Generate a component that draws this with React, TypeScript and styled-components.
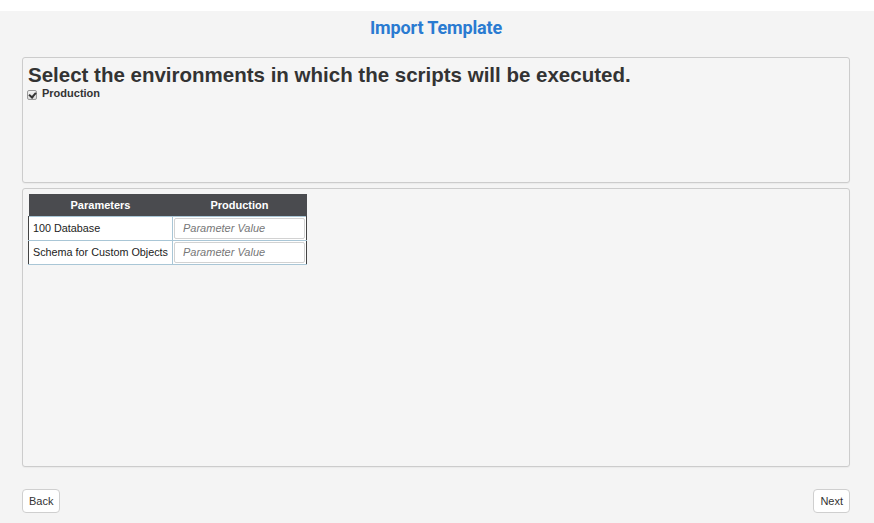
import React from "react";
import styled, { createGlobalStyle } from "styled-components";

const Global = createGlobalStyle`
  html, body { margin: 0; padding: 0; background: #ffffff; }
  body { font-family: "Liberation Sans", Arial, sans-serif; }
  * { box-sizing: border-box; }
`;

const Page = styled.div`
  margin-top: 11px;
  height: 512px;
  background: #f4f4f4;
  padding: 0 24px 0 22px;
  display: flex;
  flex-direction: column;
`;

const Title = styled.h1`
  margin: 0;
  height: 46px;
  padding-top: 6px;
  text-align: center;
  line-height: 22px;
  font-family: Roboto, "Liberation Sans", sans-serif;
  font-weight: 700;
  font-size: 18px;
  letter-spacing: -0.15px;
  color: #2a7bd1;
`;

const Panel = styled.div<{ $h: number }>`
  height: ${(p) => p.$h}px;
  border: 1px solid #cccccc;
  border-radius: 3px;
  background: #f5f5f5;
  padding: 5px;
  box-shadow: 0 1px 1px rgba(0,0,0,0.04);
`;

const Heading = styled.h2`
  margin: 0;
  font-size: 20.5px;
  line-height: 24px;
  font-weight: 700;
  color: #333333;
`;

const CheckRow = styled.label`
  display: flex;
  align-items: center;
  gap: 5px;
  font-size: 11px;
  font-weight: 700;
  color: #333333;
  margin-top: -2px;
`;

const Check = styled.input`
  appearance: none;
  margin: 5px 0 0 -1px;
  width: 10px;
  height: 10px;
  border: 1px solid #9a9a9a;
  border-radius: 2px;
  background: linear-gradient(#f2f2f2, #dcdcdc);
  position: relative;
  &:checked::after {
    content: "";
    position: absolute;
    left: 2px;
    top: 0px;
    width: 3px;
    height: 5px;
    border: solid #333;
    border-width: 0 2px 2px 0;
    transform: rotate(40deg);
  }
`;

const Gap = styled.div`
  height: 5px;
`;

const Table = styled.table`
  border-collapse: collapse;
  table-layout: fixed;
  width: 278px;
  font-size: 10.8px;
  color: #222;
`;

const Th = styled.th<{ $w: number }>`
  width: ${(p) => p.$w}px;
  height: 22px;
  background: #4a4b4f;
  color: #ffffff;
  font-weight: 700;
  font-size: 11px;
  text-align: center;
  padding: 0;
`;

const Td = styled.td<{ $input?: boolean }>`
  height: 24px;
  padding: ${(p) => (p.$input ? "1px" : "0 4px")};
  border-top: 1px solid #a9c6d6;
  border-bottom: 1px solid #a9c6d6;
  border-left: ${(p) => (p.$input ? "1px solid #a9c6d6" : "1px solid #444")};
  border-right: ${(p) => (p.$input ? "1px solid #444" : "none")};
  background: #ffffff;
  white-space: nowrap;
  overflow: hidden;
`;

const Input = styled.input`
  display: block;
  width: 100%;
  height: 21px;
  border: 1px solid #d2d2d2;
  border-radius: 2px;
  padding: 0 8px;
  font-family: "Liberation Sans", Arial, sans-serif;
  font-size: 11px;
  background: #fff;
  &::placeholder { color: #777; font-style: italic; }
`;

const Footer = styled.div`
  margin-top: 22px;
  display: flex;
  justify-content: space-between;
`;

const Button = styled.button`
  height: 24px;
  padding: 0 6px;
  background: #ffffff;
  border: 1px solid #cfcfcf;
  border-radius: 4px;
  font-family: "Liberation Sans", Arial, sans-serif;
  font-size: 11px;
  color: #333;
`;

const rows = ["100 Database", "Schema for Custom Objects"];

export default function App() {
  return (
    <>
      <Global />
      <Page>
        <Title>Import Template</Title>
        <Panel $h={126}>
          <Heading>Select the environments in which the scripts will be executed.</Heading>
          <CheckRow>
            <Check type="checkbox" defaultChecked />
            Production
          </CheckRow>
        </Panel>
        <Gap />
        <Panel $h={279}>
          <Table>
            <thead>
              <tr>
                <Th $w={144}>Parameters</Th>
                <Th $w={134}>Production</Th>
              </tr>
            </thead>
            <tbody>
              {rows.map((r) => (
                <tr key={r}>
                  <Td>{r}</Td>
                  <Td $input>
                    <Input placeholder="Parameter Value" />
                  </Td>
                </tr>
              ))}
            </tbody>
          </Table>
        </Panel>
        <Footer>
          <Button>Back</Button>
          <Button>Next</Button>
        </Footer>
      </Page>
    </>
  );
}
